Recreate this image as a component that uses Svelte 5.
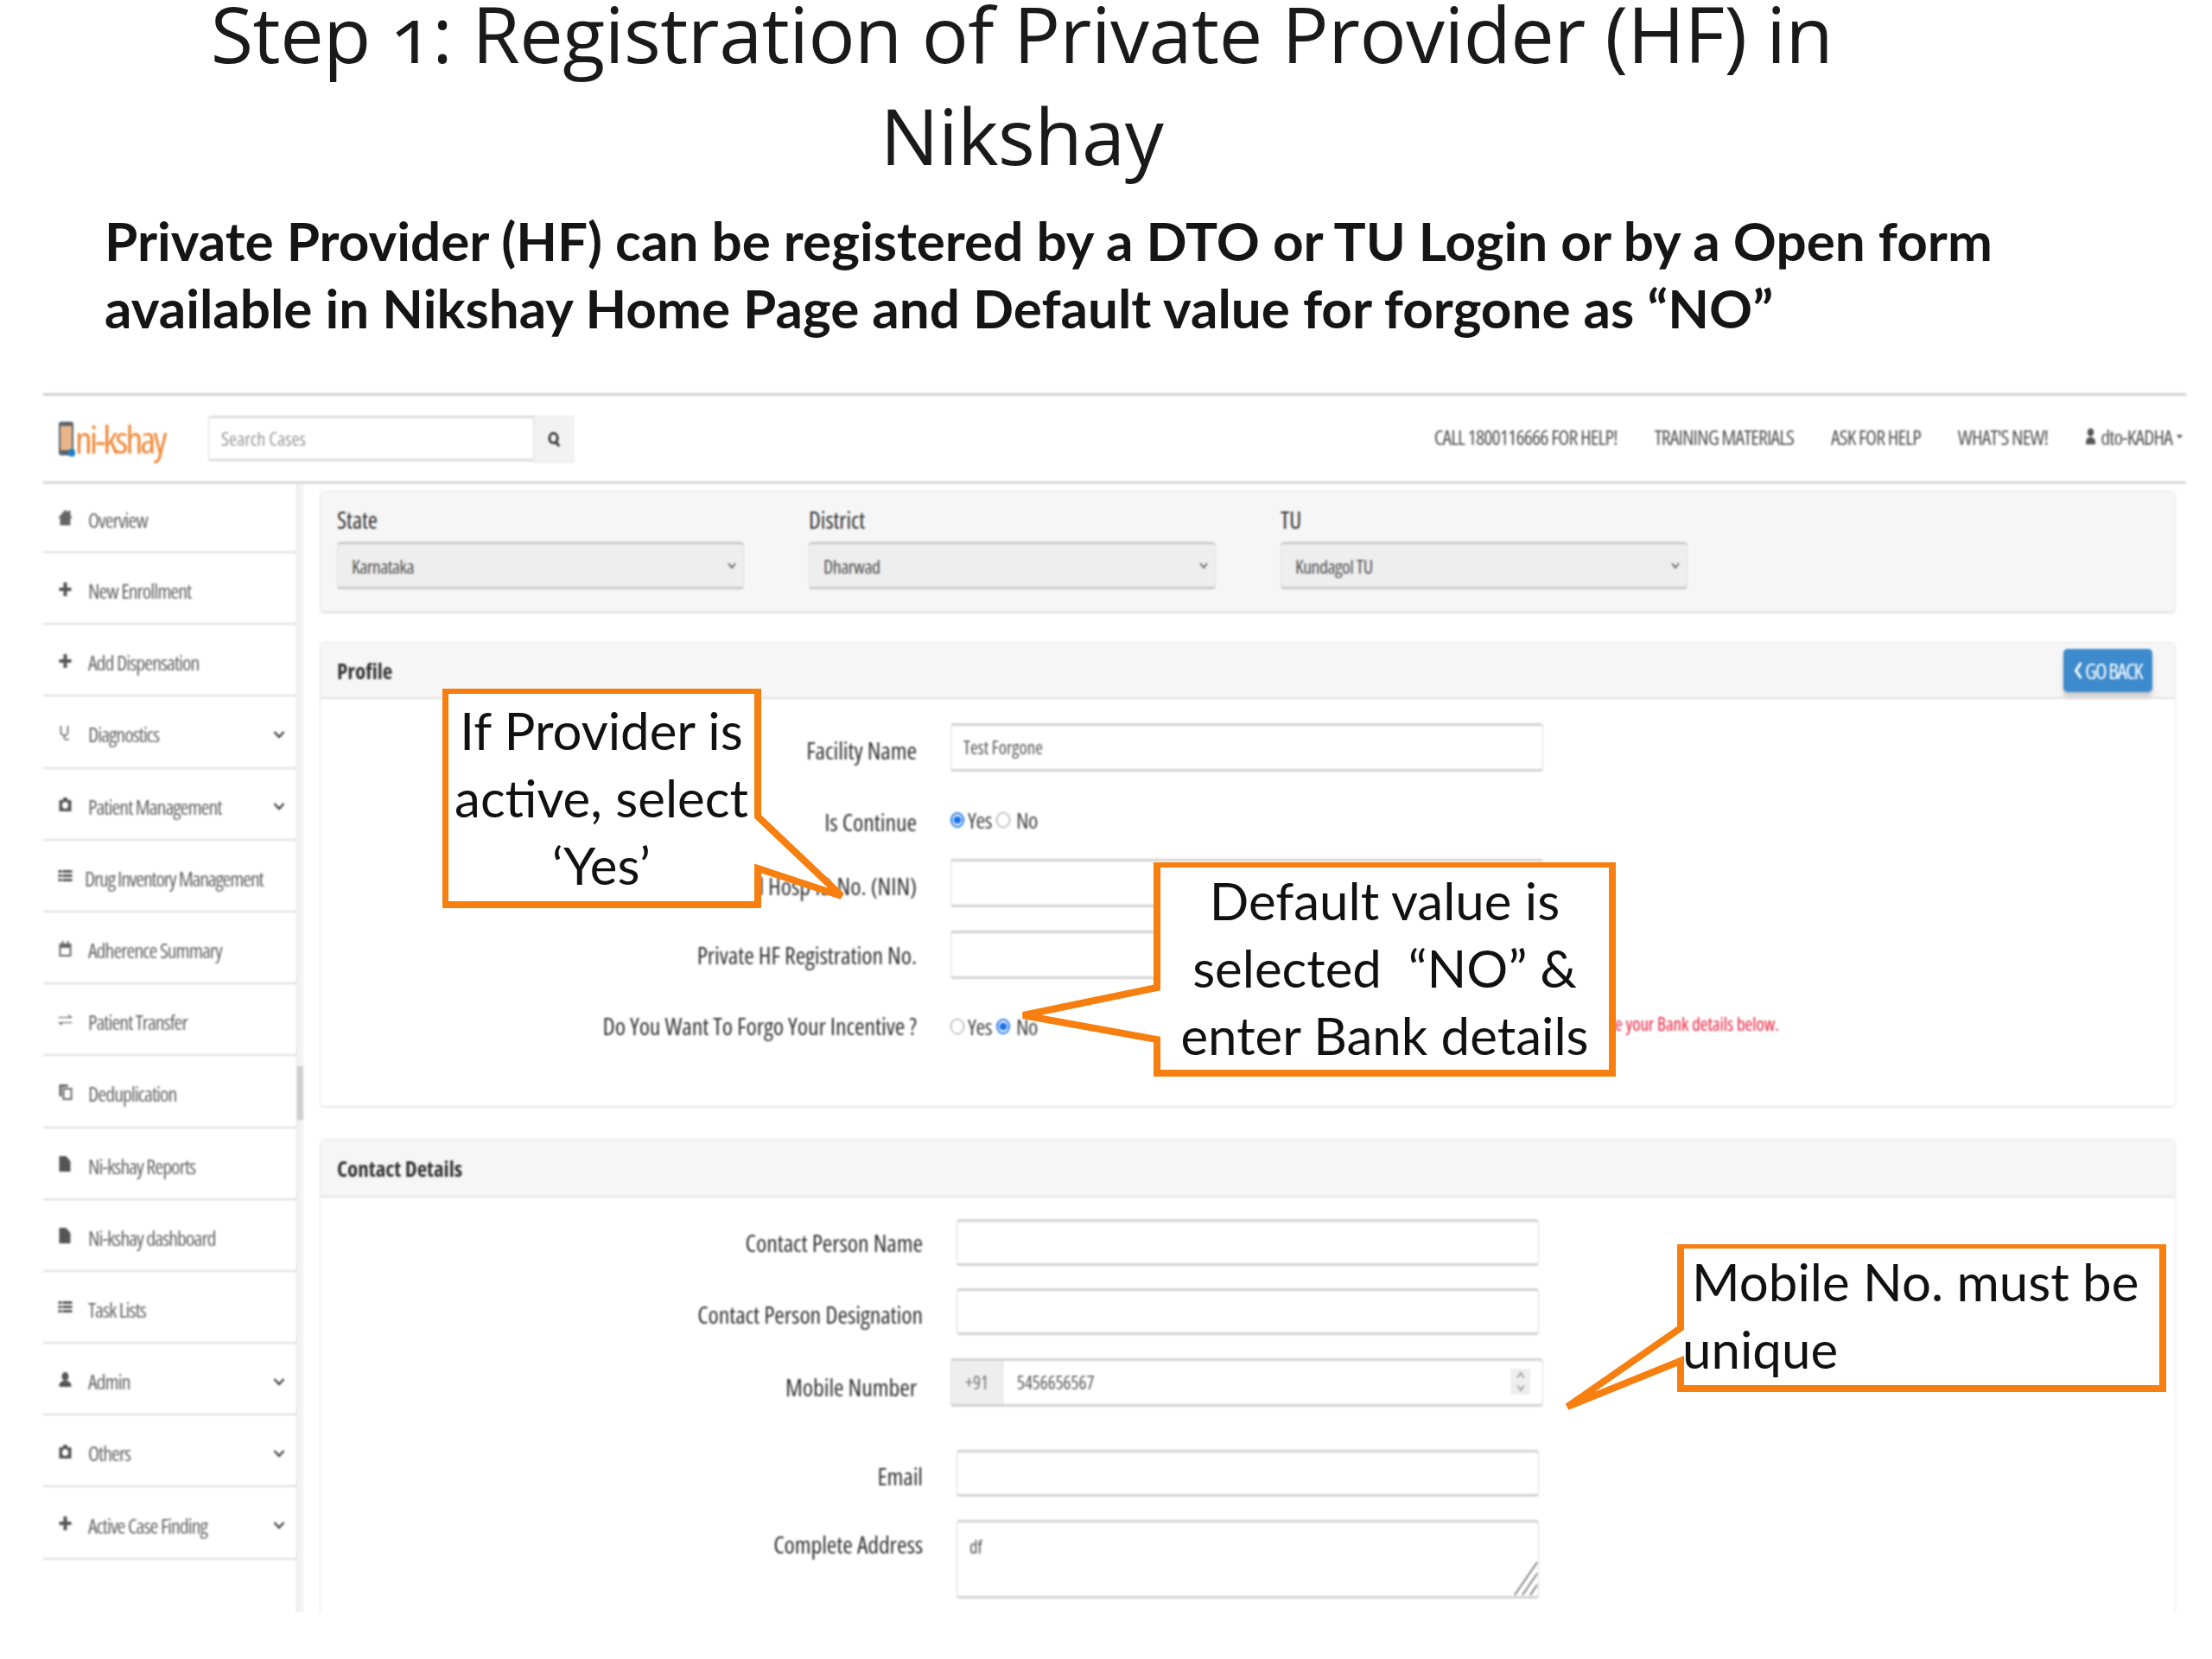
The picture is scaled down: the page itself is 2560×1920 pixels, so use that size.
<script>
  const nav = ['Overview','New Enrollment','Add Dispensation','Diagnostics','Patient Management','Drug Inventory Management','Adherence Summary','Patient Transfer','Deduplication','Ni-kshay Reports','Ni-kshay dashboard','Task Lists','Admin','Others','Active Case Finding'];
  const icons = ['home','plus','plus','steth','cam','list','cal','swap','dup','file','file','list','user','cam','plus'];
  const hasSub = [3,4,12,13,14];
  const selects = [['State','Karnataka'],['District','Dharwad'],['TU','Kundagol TU']];
</script>

<div class="page">
  <h1 class="title"><span class="l1">Step 1: Registration of Private Provider (HF) in</span><span class="l2">Nikshay</span></h1>
  <p class="lead">Private Provider (HF) can be registered by a DTO or TU Login or by a Open form available in Nikshay Home Page and Default value for forgone as “NO”</p>

  <div class="shot">
    <header class="top">
      <div class="logo">
        <svg class="phone" viewBox="0 0 20 42"><rect x="1" y="1" width="17" height="39" rx="3" fill="#59636b"/><rect x="3" y="6" width="13" height="28" fill="#e9b58a"/><circle cx="16" cy="37" r="4.500" fill="#1d7fc7"/></svg>
        <span class="logotext">ni-kshay</span>
      </div>
      <div class="search">
        <input class="searchinput" placeholder="Search Cases" />
        <button class="searchbtn" aria-label="Search">
          <svg viewBox="0 0 16 20" width="15" height="20"><ellipse cx="7" cy="9" rx="5" ry="6" fill="none" stroke="#333" stroke-width="3"/><path d="M10 14l4 5" stroke="#333" stroke-width="3"/></svg>
        </button>
      </div>
      <nav class="links">
        <span>CALL 1800116666 FOR HELP!</span>
        <span>TRAINING MATERIALS</span>
        <span>ASK FOR HELP</span>
        <span>WHAT'S NEW!</span>
        <span class="usr">
          <svg viewBox="0 0 14 22" width="13" height="22"><ellipse cx="7" cy="6" rx="4" ry="5" fill="#555"/><path d="M1 21c0-7 2-9 6-9s6 2 6 9z" fill="#555"/></svg>
          dto-KADHA
          <svg viewBox="0 0 8 5" width="7" height="5"><path d="M0 0h8L4 5z" fill="#555"/></svg>
        </span>
      </nav>
    </header>

    <div class="body">
      <aside class="side">
        {#each nav as item, i}
          <div class="item">
            <svg class="ic" viewBox="0 0 16 20">
              {#if icons[i]==='home'}<path d="M8 1l3 3V2h3v5l2 3-2 1v8H2v-8L0 10z" fill="#666"/>
              {:else if icons[i]==='plus'}<path d="M6 2h4v6h5v4h-5v6H6v-6H1V8h5z" fill="#555"/>
              {:else if icons[i]==='steth'}<path d="M3 2v7c0 3 2 4 4 4s4-1 4-4V2M7 13v3c0 2 3 3 5 1" fill="none" stroke="#777" stroke-width="1.800"/>
              {:else if icons[i]==='cam'}<path d="M1 5h4l1-3h4l1 3h4v13H1zM8 7a3.500 4 0 100 8 3.500 4 0 000-8z" fill="#555" fill-rule="evenodd"/>
              {:else if icons[i]==='list'}<path d="M0 3h4v3H0zM5 3h11v3H5zM0 8h4v3H0zM5 8h11v3H5zM0 13h4v3H0zM5 13h11v3H5z" fill="#555"/>
              {:else if icons[i]==='cal'}<path d="M1 4h3V1h2v3h4V1h2v3h3v15H1zM3 9v8h10V9z" fill="#666" fill-rule="evenodd"/>
              {:else if icons[i]==='swap'}<path d="M0 6h12V3l4 4-4 0H0zM16 13H4v3l-4-4 4 0h12z" fill="#555"/>
              {:else if icons[i]==='dup'}<path d="M1 1h10v3H4v11H1zM5 5h11v14H5zM7 7v10h7V7z" fill="#666" fill-rule="evenodd"/>
              {:else if icons[i]==='file'}<path d="M1 1h8l5 6v12H1z" fill="#555"/>
              {:else}<ellipse cx="8" cy="6" rx="4" ry="5" fill="#555"/><path d="M1 18c0-5 2-7 7-7s7 2 7 7z" fill="#555"/>{/if}
            </svg>
            <span class="itemtext">{item}</span>
            {#if hasSub.includes(i)}
              <svg class="chev" viewBox="0 0 14 10" width="14" height="10"><path d="M1.500 2L7 8l5.500-6" fill="none" stroke="#444" stroke-width="2.500"/></svg>
            {/if}
          </div>
        {/each}
      </aside>
      <div class="scroll"><div class="thumb"></div></div>

      <main class="main">
        <section class="filters">
          {#each selects as [lab, val]}
            <div class="fcol">
              <div class="flabel">{lab}</div>
              <div class="fselect">
                <span>{val}</span>
                <svg viewBox="0 0 10 8" width="10" height="8"><path d="M1 1l4 5 4-5" fill="none" stroke="#555" stroke-width="1.600"/></svg>
              </div>
            </div>
          {/each}
        </section>

        <section class="panel profile">
          <div class="phead">
            <span>Profile</span>
            <button class="back">
              <svg viewBox="0 0 10 20" width="10" height="20"><path d="M8.500 1L2.500 10l6 9" fill="none" stroke="#fff" stroke-width="3"/></svg>GO BACK
            </button>
          </div>
          <div class="form">
            <div class="row"><label class="lab" for="f1">Facility Name</label><input id="f1" class="inp" value="Test Forgone" /></div>
            <div class="row"><span class="lab">Is Continue</span>
              <div class="radios"><input type="radio" name="a" checked /><span>Yes</span><input type="radio" name="a" /><span>No</span></div>
            </div>
            <div class="row"><label class="lab" for="f3">National Hosp ID No. (NIN)</label><input id="f3" class="inp" /></div>
            <div class="row"><label class="lab" for="f4">Private HF Registration No.</label><input id="f4" class="inp" /></div>
            <div class="row"><span class="lab">Do You Want To Forgo Your Incentive ?</span>
              <div class="radios"><input type="radio" name="b" /><span>Yes</span><input type="radio" name="b" checked /><span>No</span></div>
              <span class="warn"><span>Please update your Bank details below.</span></span>
            </div>
          </div>
        </section>

        <section class="panel contact">
          <div class="phead"><span>Contact Details</span></div>
          <div class="form cform">
            <div class="row"><label class="lab" for="c1">Contact Person Name</label><input id="c1" class="inp" /></div>
            <div class="row"><label class="lab" for="c2">Contact Person Designation</label><input id="c2" class="inp" /></div>
            <div class="row mobile"><label class="lab" for="c3">Mobile Number</label>
              <div class="group">
                <span class="addon">+91</span>
                <span class="num" id="c3">5456656567</span>
                <span class="spin"><svg viewBox="0 0 10 28" width="10" height="26"><path d="M1 9l4-6 4 6M1 19l4 6 4-6" fill="none" stroke="#888" stroke-width="1.400"/></svg></span>
              </div>
            </div>
            <div class="row"><label class="lab" for="c4">Email</label><input id="c4" class="inp" /></div>
            <div class="row addr"><label class="lab" for="c5">Complete Address</label>
              <div class="areawrap">
                <textarea id="c5" class="area">df</textarea>
                <svg class="grip" viewBox="0 0 28 40" width="28" height="40"><path d="M1 39L27 1M10 39L27 14M19 39l8-12" stroke="#777" stroke-width="1.800"/></svg>
              </div>
            </div>
          </div>
        </section>
      </main>
    </div>
  </div>

  <div class="call c1">
    <svg class="shape" viewBox="0 0 470 256"><path d="M3 2H365V148L462 240 365 208V250H3z"/></svg>
    <div class="ctext center"><div>If Provider is</div><div>active, select</div><div>‘Yes’</div></div>
  </div>
  <div class="call c2">
    <svg class="shape" viewBox="0 0 690 256"><path d="M159 2H686V244H159V205L4 177 159 145z"/></svg>
    <div class="ctext center"><div>Default value is</div><div>selected  “NO” &amp;</div><div>enter Bank details</div></div>
  </div>
  <div class="call c3">
    <svg class="shape" viewBox="0 0 700 200"><path d="M135 1H693V167H135V135L4 188 135 97z"/></svg>
    <div class="ctext"><div>Mobile No. must be</div><div class="uni">unique</div></div>
  </div>
</div>

<style>
  :global(body) { margin: 0; background: #fff; }
  .page { position: relative; width: 2560px; height: 1920px; overflow: hidden; background: #fff; font-family: "Open Sans", sans-serif; color: #111; }
  .title { margin: 0; width: 2365px; text-align: center; font-weight: 400; font-size: 90px; font-family: "Open Sans", sans-serif; letter-spacing: -0.5px; color: #1a1a1a; font-variant-numeric: oldstyle-nums; filter: blur(0.4px); }
  .l1 { display: block; height: 76px; line-height: 76px; white-space: nowrap; }
  .l2 { display: block; margin-top: 21px; height: 118px; line-height: 118px; }
  .lead { margin: 24px 0 0 121px; width: 2240px; font-weight: 700; font-size: 62px; line-height: 78px; font-family: "Lato", sans-serif; color: #151515; }
  .shot { margin: 60px 30px 0 50px; width: 2480px; filter: blur(1px); font-stretch: condensed; }
  .top { display: flex; align-items: center; height: 105px; box-sizing: border-box; border-top: 3px solid #cfcfcf; border-bottom: 3px solid #d8d8d8; padding: 0 4px 0 17px; }
  .logo { display: flex; align-items: center; width: 174px; height: 50px; }
  .phone { width: 20px; height: 42px; flex: none; }
  .logotext { color: #ef8a3a; font-family: "Liberation Sans Narrow", "Open Sans", sans-serif; font-size: 44px; letter-spacing: -2.900px; line-height: 50px; }
  .search { display: flex; height: 54px; }
  .searchinput { width: 377px; box-sizing: border-box; height: 53px; border: 1px solid #ddd; border-top-width: 3px; border-bottom-width: 3px; border-radius: 4px 0 0 4px; padding: 0 14px; font-family: inherit; font-stretch: condensed; font-size: 22px; outline: none; }
  .searchinput::placeholder { color: #999; }
  .searchbtn { width: 47px; height: 55px; border: 0; background: #f2f2f2; display: flex; align-items: center; justify-content: center; padding: 0; }
  .links { margin: -5px 0 0 auto; display: flex; align-items: center; gap: 43px; font-size: 24px; letter-spacing: -0.900px; color: #555; }
  .usr { display: flex; align-items: center; gap: 5px; }

  .body { display: flex; height: 1306px; }
  .side { width: 293px; flex: none; }
  .item { display: flex; align-items: center; height: 83.2px; box-sizing: border-box; border-bottom: 2px solid #ddd; padding: 6px 0 0 17px; font-size: 24px; letter-spacing: -1px; color: #666; }
  .item:first-child { height: 80px; padding-top: 4px; }
  .item:nth-child(6) .itemtext { margin-left: 14px; letter-spacing: -1.200px; }
  .ic { width: 17px; height: 20px; flex: none; margin-top: -4px; }
  .itemtext { margin-left: 18px; }
  .chev { margin-left: auto; margin-right: 13px; }
  .scroll { width: 7px; flex: none; background: #f3f3f3; border-left: 1px solid #ddd; position: relative; }
  .thumb { position: absolute; top: 674px; left: 0; width: 7px; height: 62px; background: #cfcfcf; }

  .main { flex: 1; box-sizing: border-box; padding: 8px 12px 0 19px; min-width: 0; }
  .filters { display: flex; height: 142px; box-sizing: border-box; gap: 75px; padding: 18px 0 0 19px; background: #f6f6f6; border: 1px solid #e6e6e6; border-bottom-width: 3px; border-radius: 5px; }
  .fcol { width: 471px; }
  .flabel { font-size: 27px; line-height: 30px; height: 40px; color: #333; }
  .fselect { display: flex; align-items: center; justify-content: space-between; height: 55px; box-sizing: border-box; padding: 0 8px 0 16px; background: #eee; border: 1px solid #ddd; border-top-width: 3px; border-bottom-width: 3px; border-bottom-color: #ccc; border-top-color: #ccc; border-radius: 4px; font-size: 22px; letter-spacing: -0.500px; color: #555; }

  .panel { border: 1px solid #e6e6e6; border-radius: 5px 5px 0 0; }
  .profile { margin-top: 33px; height: 539px; border-bottom-width: 2px; box-sizing: border-box; border-radius: 5px; }
  .contact { margin-top: 36px; height: 548px; box-sizing: border-box; border-bottom: 0; }
  .phead { display: flex; align-items: center; justify-content: space-between; height: 65px; box-sizing: border-box; padding: 0 26px 0 19px; background: #f6f6f6; border-bottom: 2px solid #e2e2e2; font-weight: 700; font-size: 25px; color: #333; }
  .contact .phead { height: 67px; }
  .back { display: flex; align-items: center; gap: 3px; width: 103px; height: 50px; justify-content: center; border: 0; border-radius: 5px; background: #3d8bcd; color: #fff; font-family: inherit; font-stretch: condensed; font-size: 25px; letter-spacing: -1.500px; box-shadow: 0 6px 5px #ccc; padding: 0; }

  .form { padding-top: 28px; }
  .row { display: flex; align-items: flex-start; gap: 39px; }
  .lab { width: 690px; flex: none; text-align: right; font-size: 28px; letter-spacing: -0.100px; color: #333; line-height: 30px; padding-top: 16px; white-space: nowrap; }
  .inp { width: 686px; height: 56px; box-sizing: border-box; border: 1px solid #ddd; border-top: 3px solid #d2d2d2; border-bottom: 3px solid #d2d2d2; border-radius: 4px; padding: 0 14px; font-family: inherit; font-stretch: condensed; font-size: 21px; color: #555; outline: none; background: #fff; }
  .form > .row:nth-child(2) { margin-top: 27px; height: 56px; }
  .form > .row:nth-child(3) { margin-top: 18px; }
  .form > .row:nth-child(4) { margin-top: 27px; }
  .form > .row:nth-child(4) .lab { padding-top: 13px; }
  .form > .row:nth-child(5) { margin-top: 26px; height: 56px; position: relative; }
  .form > .row:nth-child(5) .lab { padding-top: 13px; }
  .radios { display: flex; align-items: center; height: 56px; font-size: 26px; letter-spacing: -0.500px; color: #444; margin-top: 1px; }
  .radios span:nth-of-type(1) { margin: 0 5px 0 4px; }
  .radios span:nth-of-type(2) { margin-left: 7px; }
  .radios input { appearance: none; width: 16px; height: 18px; margin: 0; border-radius: 50%; border: 1px solid #888; background: #fff; }
  .radios input:checked { border: 2px solid #1a73e8; background: radial-gradient(circle, #1a73e8 0 4px, #fff 5px); }
  .warn { position: absolute; top: 12px; left: 1496px; width: 192px; display: flex; justify-content: flex-end; overflow: hidden; color: #e8203c; font-size: 21px; white-space: nowrap; }
  .warn span { flex: none; }
  .cform { padding-top: 25px; }
  .cform .row { gap: 39px; }
  .cform .lab { width: 697px; padding-top: 14px; }
  .cform > .row:nth-child(1) .lab { padding-top: 12px; }
  .cform .inp { width: 674px; height: 54px; }
  .cform > .row:nth-child(2) { margin-top: 26px; height: auto; }
  .cform > .row:nth-child(2) .lab { padding-top: 15px; }
  .cform > .row:nth-child(3) { margin-top: 27px; }
  .cform > .row:nth-child(4) { margin-top: 50px; }
  .cform > .row:nth-child(4) .lab { padding-top: 15px; }
  .cform > .row:nth-child(5) { margin-top: 27px; height: auto; position: static; }
  .cform > .addr .lab { padding-top: 20px; }
  .cform .mobile .lab { width: 690px; padding-top: 18px; }
  .group { display: flex; align-items: stretch; width: 686px; height: 56px; box-sizing: border-box; border: 1px solid #ddd; border-top: 3px solid #d2d2d2; border-bottom: 3px solid #d2d2d2; border-radius: 4px; font-size: 21px; color: #555; }
  .addon { width: 59px; background: #eee; border-right: 1px solid #ddd; display: flex; align-items: center; justify-content: center; color: #777; }
  .num { flex: 1; display: flex; align-items: center; padding-left: 16px; }
  .spin { width: 23px; height: 30px; margin: 9px 14px 0 0; background: #eee; display: flex; align-items: center; justify-content: center; }
  .areawrap { position: relative; width: 674px; height: 91px; }
  .area { width: 100%; height: 100%; box-sizing: border-box; border: 1px solid #ddd; border-top: 3px solid #d2d2d2; border-bottom: 3px solid #d2d2d2; border-radius: 4px; padding: 14px; font-family: inherit; font-stretch: condensed; font-size: 21px; color: #555; resize: none; outline: none; display: block; }
  .grip { position: absolute; right: 1px; bottom: 3px; }

  .call { position: absolute; font-family: "Lato", "Open Sans", sans-serif; color: #111; }
  .shape { position: absolute; inset: 0; width: 100%; height: 100%; }
  .shape path { fill: #fff; stroke: #f77f0f; stroke-width: 8; stroke-linejoin: miter; }
  .ctext { position: absolute; font-size: 60px; line-height: 78px; white-space: pre; }
  .center { text-align: center; }
  .c1 { left: 512px; top: 797px; width: 470px; height: 256px; }
  .c1 .ctext { left: 4px; width: 360px; top: 9px; }
  .c2 { left: 1180px; top: 998px; width: 690px; height: 256px; }
  .c2 .ctext { left: 159px; width: 527px; top: 5px; }
  .c3 { left: 1810px; top: 1440px; width: 700px; height: 200px; }
  .c3 .ctext { left: 148px; top: 4px; }
  .uni { margin-left: -11px; }
</style>
